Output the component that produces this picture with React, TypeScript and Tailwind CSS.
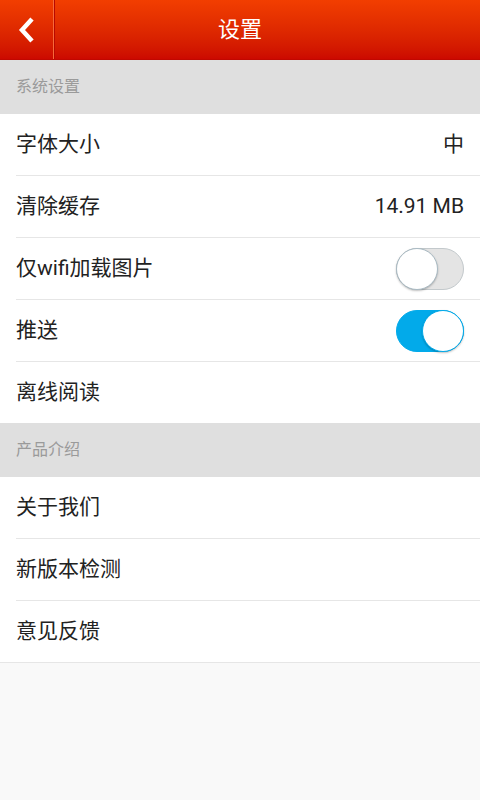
import React, { useState } from "react";

const font = "font-['Roboto','Noto_Sans_CJK_SC',sans-serif]";

function Toggle({ on, onClick }: { on: boolean; onClick: () => void }) {
  return (
    <button
      onClick={onClick}
      className={`relative w-[68px] h-[42px] rounded-full border ${
        on ? "bg-[#02aaea] border-[#02aaea]" : "bg-[#e4e4e4] border-[#c3c9cc]"
      }`}
    >
      <span
        className={`absolute top-[-1px] w-[42px] h-[42px] rounded-full bg-white border-[1.5px] shadow-[0_1px_2px_rgba(0,0,0,0.25)] ${
          on ? "right-[-1px] border-[#02aaea]" : "left-[-1px] border-[#a9bac3]"
        }`}
      />
    </button>
  );
}

function SectionHead({ title }: { title: string }) {
  return (
    <div className="h-[54px] bg-[#dfdfdf] flex items-center pl-4 text-[16px] text-[#9a9a9a]">
      {title}
    </div>
  );
}

function Row({
  label,
  right,
  last,
  full,
}: {
  label: string;
  right?: React.ReactNode;
  last?: boolean;
  full?: boolean;
}) {
  return (
    <div className={`bg-white ${full ? "" : "pl-4"}`}>
      <div
        className={`h-[61px] flex items-center justify-between pr-4 ${full ? "pl-4" : ""}`}
      >
        <span className="text-[21px] text-[#222]">{label}</span>
        {right}
      </div>
      {!last && <div className="h-px bg-[#e6e6e6]" />}
    </div>
  );
}

export default function App() {
  const [wifi, setWifi] = useState(false);
  const [push, setPush] = useState(true);

  return (
    <div className={`w-[480px] h-[800px] bg-[#f9f9f9] ${font}`}>
      {/* Title bar */}
      <div className="h-[60px] bg-gradient-to-b from-[#f23e00] to-[#cc0900] flex items-center relative border-b border-[#c00800]">
        <div className="w-[53px] h-full flex items-center justify-center">
          <svg width="24" height="28" viewBox="0 0 24 28">
            <path d="M17 3 L7 14 L17 25" fill="none" stroke="white" strokeWidth="4.5" strokeLinecap="butt" strokeLinejoin="miter" />
          </svg>
        </div>
        <div className="w-px h-full bg-[#f76a3a]" />
        <div className="w-px h-full bg-[#b80800]" />
        <div className="absolute inset-0 flex items-center justify-center text-white text-[22px] pointer-events-none">
          设置
        </div>
      </div>

      <SectionHead title="系统设置" />
      <Row label="字体大小" right={<span className="text-[21px] text-[#222]">中</span>} />
      <Row label="清除缓存" right={<span className="text-[21px] text-[#222]">14.91 MB</span>} />
      <Row label="仅wifi加载图片" right={<Toggle on={wifi} onClick={() => setWifi(!wifi)} />} />
      <Row label="推送" right={<Toggle on={push} onClick={() => setPush(!push)} />} />
      <Row label="离线阅读" last />

      <SectionHead title="产品介绍" />
      <Row label="关于我们" />
      <Row label="新版本检测" />
      <Row label="意见反馈" full />
    </div>
  );
}
